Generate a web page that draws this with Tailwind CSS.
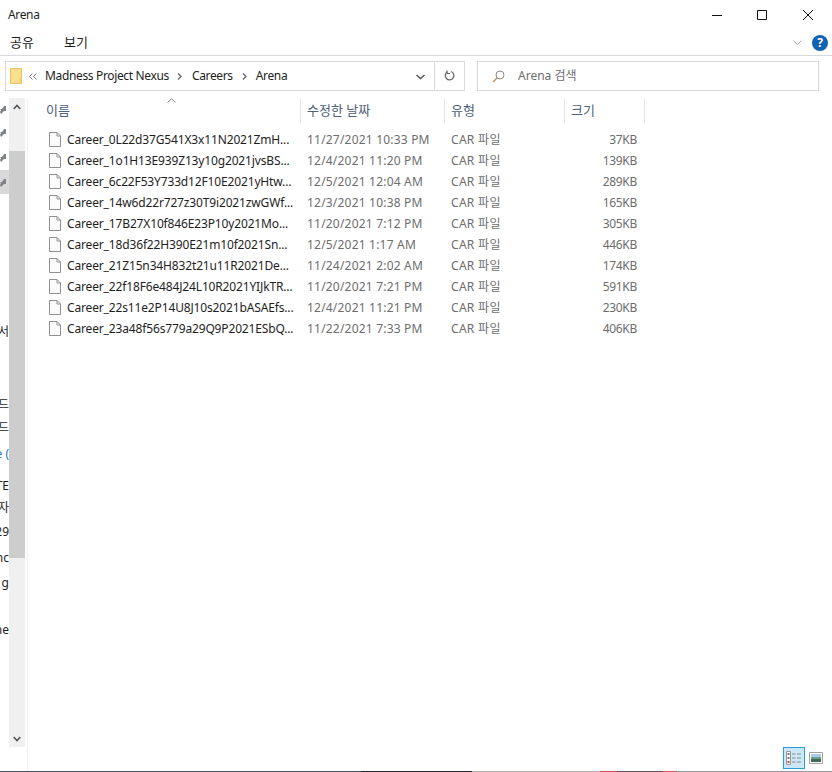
<!DOCTYPE html>
<html lang="ko">
<head>
  <meta charset="UTF-8" />
  <meta name="viewport" content="width=device-width, initial-scale=1.0" />
  <title>Arena</title>
  <script src="https://cdn.jsdelivr.net/npm/@tailwindcss/browser@4"></script>
</head>
<body class="bg-white overflow-hidden font-['Noto_Sans','Noto_Sans_CJK_KR',sans-serif] text-[12px] text-[#1e1e1e]">
  <div class="relative flex flex-col w-[832px] h-[772px] overflow-hidden">

    <!-- title bar -->
    <div class="flex items-center h-[30px] pl-2">
      <span class="flex-1 tracking-[-0.35px]">Arena</span>
      <svg class="mr-[35px]" width="10" height="11" viewBox="0 0 10 11"><path d="M0 5.5h10" stroke="#111" fill="none"/></svg>
      <svg class="mr-[36px]" width="10" height="10" viewBox="0 0 10 10"><path d="M.5.5h9v9h-9z" stroke="#111" fill="none"/></svg>
      <svg class="mr-[19px]" width="10" height="10" viewBox="0 0 10 10"><path d="M0 0l10 10M10 0l-10 10" stroke="#111" fill="none"/></svg>
    </div>

    <!-- ribbon tabs -->
    <div class="flex items-center h-[25px] border-b border-[#d9d9d9] box-content text-[13px]">
      <span class="ml-[10px] w-[54px]">공유</span>
      <span class="flex-1">보기</span>
      <svg class="mr-[10px]" width="9" height="6" viewBox="0 0 9 6"><path d="M.5.500l4 4 4-4" stroke="#a8a8a8" fill="none"/></svg>
      <div class="flex items-center justify-center w-4 h-4 mr-[4px] rounded-full bg-[#0f62b4] text-white text-[12px] font-bold">?</div>
    </div>

    <!-- address + search -->
    <div class="flex h-[30px] mt-[5px] ml-[5px]">
      <div class="flex items-center w-[430px] border border-[#d9d9d9] tracking-[-0.35px]">
        <svg class="ml-[4px]" width="13" height="16" viewBox="0 0 13 16"><path d="M.5.500h11v15h-11z" fill="#fbe08e" stroke="#e7c45e"/><path d="M9.500 10h2.500v5.500h-2.500z" fill="#f3cf6c"/></svg>
        <svg class="ml-[6px]" width="8" height="7" viewBox="0 0 8 7"><path d="M3.500.5l-3 3 3 3M7.500.5l-3 3 3 3" stroke="#777" fill="none"/></svg>
        <span class="ml-[8px]">Madness Project Nexus</span>
        <svg class="ml-[8px] mr-[10px]" width="5" height="7" viewBox="0 0 5 7"><path d="M1 .500l3 3-3 3" stroke="#666" fill="none" stroke-width="1.300"/></svg>
        <span>Careers</span>
        <svg class="ml-[9px] mr-[9px]" width="5" height="7" viewBox="0 0 5 7"><path d="M1 .500l3 3-3 3" stroke="#666" fill="none" stroke-width="1.300"/></svg>
        <span class="flex-1">Arena</span>
        <svg class="mr-[9px] mt-[2px]" width="9" height="6" viewBox="0 0 9 6"><path d="M.5 1l4 3.500 4-3.500" stroke="#555" fill="none" stroke-width="1.500"/></svg>
      </div>
      <div class="flex items-center justify-center w-[30px] border border-l-0 border-[#d9d9d9]">
        <svg width="12" height="12" viewBox="0 0 12 12"><path d="M7 1.500a4.300 4.300 0 1 1-3.500.3" stroke="#666" fill="none" stroke-width="1.300"/><path d="M3 .5v3h3" stroke="#666" fill="none" stroke-width="1.100"/></svg>
      </div>
      <div class="flex items-center w-[342px] ml-[12px] border border-[#d9d9d9] text-[#6d6d6d]">
        <svg class="ml-[14px]" width="13" height="13" viewBox="0 0 13 13"><circle cx="8" cy="5" r="4" stroke="#8a8a8a" fill="none"/><path d="M5 8l-4 4" stroke="#b98f6a" stroke-width="1.300"/></svg>
        <span class="ml-[13px]">Arena 검색</span>
      </div>
    </div>

    <div class="flex flex-1 mt-[7px]">
      <!-- clipped navigation pane -->
      <div class="flex flex-col items-end w-[9px] overflow-hidden whitespace-nowrap">
        <div class="flex items-center self-stretch h-[22px]"><svg width="6" height="9" viewBox="0 0 6 9"><path d="M0 4h2l2-3h2v5h-2l-3 3-1-2 1-2z" fill="#808488"/></svg></div>
        <div class="flex items-center self-stretch h-[25px]"><svg width="6" height="9" viewBox="0 0 6 9"><path d="M0 4h2l2-3h2v5h-2l-3 3-1-2 1-2z" fill="#808488"/></svg></div>
        <div class="flex items-center self-stretch h-[25px]"><svg width="6" height="9" viewBox="0 0 6 9"><path d="M0 4h2l2-3h2v5h-2l-3 3-1-2 1-2z" fill="#808488"/></svg></div>
        <div class="flex items-center self-stretch h-[24px] bg-[#d9d9d9]"><svg width="6" height="9" viewBox="0 0 6 9"><path d="M0 4h2l2-3h2v5h-2l-3 3-1-2 1-2z" fill="#808488"/></svg></div>
        <div class="h-4 leading-4 mt-[130px]">서</div>
        <div class="h-4 leading-4 mt-[57px]">소드</div>
        <div class="h-4 leading-4 mt-[7px]">소드</div>
        <div class="h-4 leading-4 mt-[10px] text-[#1a73c8]">e (</div>
        <div class="h-4 leading-4 mt-[16px]">TE</div>
        <div class="h-4 leading-4 mt-[6px]">자</div>
        <div class="h-4 leading-4 mt-[8px]">29</div>
        <div class="h-4 leading-4 mt-[10px]">nc</div>
        <div class="h-4 leading-4 mt-[9px]">g</div>
        <div class="h-4 leading-4 mt-[31px]">ne</div>
      </div>

      <!-- scrollbar -->
      <div class="flex flex-col w-4 h-[649px] bg-[#f0f0f0]">
        <div class="flex items-center justify-center h-[17px]">
          <svg width="8" height="6" viewBox="0 0 8 6"><path d="M.7 5l3.300-3.500 3.300 3.500" stroke="#555" fill="none" stroke-width="1.600"/></svg>
        </div>
        <div class="h-[407px] mt-[36px] bg-[#cdcdcd]"></div>
        <div class="flex-1"></div>
        <div class="flex items-center justify-center h-[17px]">
          <svg width="8" height="6" viewBox="0 0 8 6"><path d="M.7 1l3.300 3.500 3.300-3.500" stroke="#555" fill="none" stroke-width="1.600"/></svg>
        </div>
      </div>

      <!-- file list -->
      <div class="flex-1 ml-[2px] border-l border-[#f2f2f2]">
        <div class="relative flex h-[25px] text-[13px] text-[#4c607a]">
          <svg class="absolute left-[139px] top-0" width="9" height="5" viewBox="0 0 9 5"><path d="M.5 4.500l4-4 4 4" stroke="#8a8a8a" fill="none"/></svg>
          <div class="flex items-center w-[273px] pl-[18px] border-r border-[#e5e5e5]">이름</div>
          <div class="flex items-center w-[144px] pl-[6px] border-r border-[#e5e5e5]">수정한 날짜</div>
          <div class="flex items-center w-[120px] pl-[6px] border-r border-[#e5e5e5]">유형</div>
          <div class="flex items-center w-[80px] pl-[6px] border-r border-[#e5e5e5]">크기</div>
        </div>

        <div class="mt-[6px]">
          <div class="flex items-center h-[21px]">
            <svg class="ml-[21px] mr-[6px]" width="12" height="15" viewBox="0 0 12 15"><path d="M.5.500h7.500l3.500 3.500v10.500h-11zM8 .5v3.500h3.500" fill="#fbfbfb" stroke="#8f8f8f"/></svg>
            <div class="w-[240px] tracking-[-0.15px]">Career_0L22d37G541X3x11N2021ZmH...</div>
            <div class="w-[144px] text-[#6d6d6d] tracking-[0.2px]">11/27/2021 10:33 PM</div>
            <div class="w-[120px] text-[#6d6d6d] tracking-[0.3px]">CAR 파일</div>
            <div class="w-[66px] text-right text-[#6d6d6d] tracking-[-0.3px]">37KB</div>
          </div>
          <div class="flex items-center h-[21px]">
            <svg class="ml-[21px] mr-[6px]" width="12" height="15" viewBox="0 0 12 15"><path d="M.5.500h7.500l3.500 3.500v10.500h-11zM8 .5v3.500h3.500" fill="#fbfbfb" stroke="#8f8f8f"/></svg>
            <div class="w-[240px] tracking-[-0.15px]">Career_1o1H13E939Z13y10g2021jvsBS...</div>
            <div class="w-[144px] text-[#6d6d6d] tracking-[0.2px]">12/4/2021 11:20 PM</div>
            <div class="w-[120px] text-[#6d6d6d] tracking-[0.3px]">CAR 파일</div>
            <div class="w-[66px] text-right text-[#6d6d6d] tracking-[-0.3px]">139KB</div>
          </div>
          <div class="flex items-center h-[21px]">
            <svg class="ml-[21px] mr-[6px]" width="12" height="15" viewBox="0 0 12 15"><path d="M.5.500h7.500l3.500 3.500v10.500h-11zM8 .5v3.500h3.500" fill="#fbfbfb" stroke="#8f8f8f"/></svg>
            <div class="w-[240px] tracking-[-0.15px]">Career_6c22F53Y733d12F10E2021yHtw...</div>
            <div class="w-[144px] text-[#6d6d6d] tracking-[0.2px]">12/5/2021 12:04 AM</div>
            <div class="w-[120px] text-[#6d6d6d] tracking-[0.3px]">CAR 파일</div>
            <div class="w-[66px] text-right text-[#6d6d6d] tracking-[-0.3px]">289KB</div>
          </div>
          <div class="flex items-center h-[21px]">
            <svg class="ml-[21px] mr-[6px]" width="12" height="15" viewBox="0 0 12 15"><path d="M.5.500h7.500l3.500 3.500v10.500h-11zM8 .5v3.500h3.500" fill="#fbfbfb" stroke="#8f8f8f"/></svg>
            <div class="w-[240px] tracking-[-0.15px]">Career_14w6d22r727z30T9i2021zwGWf...</div>
            <div class="w-[144px] text-[#6d6d6d] tracking-[0.2px]">12/3/2021 10:38 PM</div>
            <div class="w-[120px] text-[#6d6d6d] tracking-[0.3px]">CAR 파일</div>
            <div class="w-[66px] text-right text-[#6d6d6d] tracking-[-0.3px]">165KB</div>
          </div>
          <div class="flex items-center h-[21px]">
            <svg class="ml-[21px] mr-[6px]" width="12" height="15" viewBox="0 0 12 15"><path d="M.5.500h7.500l3.500 3.500v10.500h-11zM8 .5v3.500h3.500" fill="#fbfbfb" stroke="#8f8f8f"/></svg>
            <div class="w-[240px] tracking-[-0.15px]">Career_17B27X10f846E23P10y2021Mo...</div>
            <div class="w-[144px] text-[#6d6d6d] tracking-[0.2px]">11/20/2021 7:12 PM</div>
            <div class="w-[120px] text-[#6d6d6d] tracking-[0.3px]">CAR 파일</div>
            <div class="w-[66px] text-right text-[#6d6d6d] tracking-[-0.3px]">305KB</div>
          </div>
          <div class="flex items-center h-[21px]">
            <svg class="ml-[21px] mr-[6px]" width="12" height="15" viewBox="0 0 12 15"><path d="M.5.500h7.500l3.500 3.500v10.500h-11zM8 .5v3.500h3.500" fill="#fbfbfb" stroke="#8f8f8f"/></svg>
            <div class="w-[240px] tracking-[-0.15px]">Career_18d36f22H390E21m10f2021Sn...</div>
            <div class="w-[144px] text-[#6d6d6d] tracking-[0.2px]">12/5/2021 1:17 AM</div>
            <div class="w-[120px] text-[#6d6d6d] tracking-[0.3px]">CAR 파일</div>
            <div class="w-[66px] text-right text-[#6d6d6d] tracking-[-0.3px]">446KB</div>
          </div>
          <div class="flex items-center h-[21px]">
            <svg class="ml-[21px] mr-[6px]" width="12" height="15" viewBox="0 0 12 15"><path d="M.5.500h7.500l3.500 3.500v10.500h-11zM8 .5v3.500h3.500" fill="#fbfbfb" stroke="#8f8f8f"/></svg>
            <div class="w-[240px] tracking-[-0.15px]">Career_21Z15n34H832t21u11R2021De...</div>
            <div class="w-[144px] text-[#6d6d6d] tracking-[0.2px]">11/24/2021 2:02 AM</div>
            <div class="w-[120px] text-[#6d6d6d] tracking-[0.3px]">CAR 파일</div>
            <div class="w-[66px] text-right text-[#6d6d6d] tracking-[-0.3px]">174KB</div>
          </div>
          <div class="flex items-center h-[21px]">
            <svg class="ml-[21px] mr-[6px]" width="12" height="15" viewBox="0 0 12 15"><path d="M.5.500h7.500l3.500 3.500v10.500h-11zM8 .5v3.500h3.500" fill="#fbfbfb" stroke="#8f8f8f"/></svg>
            <div class="w-[240px] tracking-[-0.15px]">Career_22f18F6e484J24L10R2021YIJkTR...</div>
            <div class="w-[144px] text-[#6d6d6d] tracking-[0.2px]">11/20/2021 7:21 PM</div>
            <div class="w-[120px] text-[#6d6d6d] tracking-[0.3px]">CAR 파일</div>
            <div class="w-[66px] text-right text-[#6d6d6d] tracking-[-0.3px]">591KB</div>
          </div>
          <div class="flex items-center h-[21px]">
            <svg class="ml-[21px] mr-[6px]" width="12" height="15" viewBox="0 0 12 15"><path d="M.5.500h7.500l3.500 3.500v10.500h-11zM8 .5v3.500h3.500" fill="#fbfbfb" stroke="#8f8f8f"/></svg>
            <div class="w-[240px] tracking-[-0.15px]">Career_22s11e2P14U8J10s2021bASAEfs...</div>
            <div class="w-[144px] text-[#6d6d6d] tracking-[0.2px]">12/4/2021 11:21 PM</div>
            <div class="w-[120px] text-[#6d6d6d] tracking-[0.3px]">CAR 파일</div>
            <div class="w-[66px] text-right text-[#6d6d6d] tracking-[-0.3px]">230KB</div>
          </div>
          <div class="flex items-center h-[21px]">
            <svg class="ml-[21px] mr-[6px]" width="12" height="15" viewBox="0 0 12 15"><path d="M.5.500h7.500l3.500 3.500v10.500h-11zM8 .5v3.500h3.500" fill="#fbfbfb" stroke="#8f8f8f"/></svg>
            <div class="w-[240px] tracking-[-0.15px]">Career_23a48f56s779a29Q9P2021ESbQ...</div>
            <div class="w-[144px] text-[#6d6d6d] tracking-[0.2px]">11/22/2021 7:33 PM</div>
            <div class="w-[120px] text-[#6d6d6d] tracking-[0.3px]">CAR 파일</div>
            <div class="w-[66px] text-right text-[#6d6d6d] tracking-[-0.3px]">406KB</div>
          </div>
        </div>
      </div>
    </div>

    <!-- view toggle buttons -->
    <div class="absolute right-[9px] bottom-[3px] flex items-center gap-[4px]">
      <div class="flex items-center justify-center w-[22px] h-[22px] bg-[#cce8f6] border border-[#26a0da]">
        <svg width="16" height="16" viewBox="0 0 16 16"><path d="M.5 1.500h4v13h-4z" fill="#fff" stroke="#999"/><path d="M1.500 3h2v2h-2z" fill="#777"/><path d="M1.500 7h2v2h-2z" fill="#777"/><path d="M1.500 11h2v2h-2z" fill="#c44"/><path d="M6 4h3.500M11 4h4M6 8h3.500M11 8h4M6 12h3.500M11 12h4" stroke="#888"/></svg>
      </div>
      <svg width="14" height="12" viewBox="0 0 14 12"><path d="M.5.500h13v11h-13z" fill="#fff" stroke="#a0a0a0"/><path d="M2 2h10v3h-10z" fill="#a9cdea"/><path d="M2 5h10v2h-10z" fill="#6f9a8c"/><path d="M2 7h10v3h-10z" fill="#3f6a5c"/></svg>
    </div>

    <!-- desktop visible under the window edge -->
    <div class="flex h-px">
      <div class="w-[361px] bg-[#45505e]"></div>
      <div class="w-[111px] bg-[#22252b]"></div>
      <div class="w-[128px] bg-[#b0adac]"></div>
      <div class="w-[17px] bg-[#d9485a]"></div>
      <div class="w-[46px] bg-[#5c5456]"></div>
      <div class="w-[14px] bg-[#e0505f]"></div>
      <div class="flex-1 bg-[#9a9a9a]"></div>
    </div>
  </div>
</body>
</html>
